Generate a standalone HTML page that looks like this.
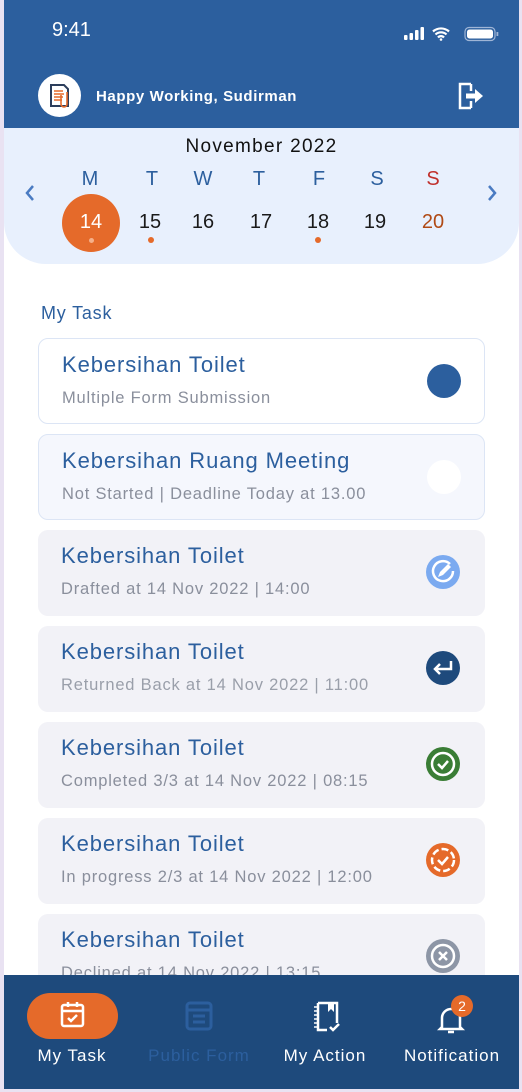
<!DOCTYPE html>
<html><head><meta charset="utf-8"><style>
*{margin:0;padding:0;box-sizing:border-box}
body{width:522px;height:1092px;background:#E9E2F2;font-family:"Liberation Sans",sans-serif;position:relative;overflow:hidden}
.frame{position:absolute;left:4px;top:0;width:515px;height:1089px;background:#fff;overflow:hidden}
.hdr{position:absolute;left:0;top:0;width:515px;height:128px;background:#2C5F9E}
.time{position:absolute;left:48px;top:19px;color:#fff;font-size:20px}
.cal{position:absolute;left:0;top:128px;width:515px;height:136px;background:#E8F0FD;border-radius:0 0 42px 42px}
.abs{position:absolute}
.card{position:absolute;left:34px;width:447px;height:86px;border-radius:10px;background:#F2F2F7}
.card .t{position:absolute;left:23px;top:13px;font-size:22px;color:#2C5F9E;letter-spacing:0.9px}
.card .s{position:absolute;left:23px;top:50px;font-size:16.5px;color:#8A8F9C;letter-spacing:0.8px}
.card svg{position:absolute;left:387px;top:24px}
.nav{position:absolute;left:0;top:975px;width:515px;height:114px;background:#1E4A7C}
.lbl{position:absolute;top:71px;font-size:17px;color:#fff;letter-spacing:1px;text-align:center}
.dn{position:absolute;font-size:20px;color:#2C5F9E;text-align:center;width:30px}
.dd{position:absolute;font-size:20px;color:#1a1a1a;text-align:center;width:40px}
</style></head><body>
<div class="frame">
<div class="hdr">
 <div class="time">9:41</div>
 <svg class="abs" style="left:400px;top:26px" width="100" height="16" viewBox="0 0 100 16">
  <rect x="0" y="9" width="3.5" height="5" rx="1" fill="#fff"/><rect x="5.5" y="7" width="3.5" height="7" rx="1" fill="#fff"/><rect x="11" y="4" width="3.5" height="10" rx="1" fill="#fff"/><rect x="16.5" y="1" width="3.5" height="13" rx="1" fill="#fff"/>
  <path d="M29 5.5a12 12 0 0 1 16 0M31.5 8.5a8 8 0 0 1 11 0M34 11.5a4 4 0 0 1 6 0" stroke="#fff" stroke-width="2.2" fill="none"/><circle cx="37" cy="13.5" r="1.3" fill="#fff"/>
  <rect x="61" y="1.5" width="30" height="13" rx="4" stroke="#9fb5d6" stroke-width="1.2" fill="none"/><rect x="63" y="3.5" width="26" height="9" rx="2.5" fill="#fff"/><rect x="92.5" y="6" width="1.8" height="4" fill="#9fb5d6"/>
 </svg>
 <div class="abs" style="left:34px;top:74px;width:43px;height:43px;border-radius:50%;background:#fff"></div>
 <svg class="abs" style="left:44px;top:82px" width="26" height="28" viewBox="0 0 26 28"><path d="M3 3h13l4 4v17H3z" fill="none" stroke="#2C3E5C" stroke-width="2"/><path d="M6 9h9M6 12h10M6 15h9M6 18h8" stroke="#E56A2A" stroke-width="1.6"/><path d="M19 10v12a3 3 0 0 1-6 0V13" fill="none" stroke="#E56A2A" stroke-width="1.6"/></svg>
 <div class="abs" style="left:92px;top:88px;color:#fff;font-size:15px;font-weight:bold;letter-spacing:0.6px">Happy Working, Sudirman</div>
 <svg class="abs" style="left:452px;top:80px" width="30" height="32" viewBox="0 0 30 32"><path d="M15 4H4v24h11M15 11v-7M15 28v-7" fill="none" stroke="#fff" stroke-width="2.5"/><path d="M10 16h10" stroke="#fff" stroke-width="5"/><path d="M19 9l8 7-8 7z" fill="#fff"/></svg>
</div>
<div class="cal">
 <div class="abs" style="left:0;width:515px;top:8px;text-align:center;font-size:19px;color:#111;letter-spacing:1.3px">November 2022</div>
 <svg class="abs" style="left:20px;top:56px" width="12" height="18"><path d="M9 2L3 9l6 7" stroke="#4A7BC2" stroke-width="2.5" fill="none"/></svg>
 <svg class="abs" style="left:482px;top:56px" width="12" height="18"><path d="M3 2l6 7-6 7" stroke="#4A7BC2" stroke-width="2.5" fill="none"/></svg>
 <div class="dn" style="left:71px;top:40px">M</div>
 <div class="dn" style="left:133px;top:40px">T</div>
 <div class="dn" style="left:184px;top:40px">W</div>
 <div class="dn" style="left:240px;top:40px">T</div>
 <div class="dn" style="left:300px;top:40px">F</div>
 <div class="dn" style="left:358px;top:40px">S</div>
 <div class="dn" style="left:414px;top:40px;color:#C0302C">S</div>
 <div class="abs" style="left:58px;top:66px;width:58px;height:58px;border-radius:50%;background:#E56A2A"></div>
 <div class="dd" style="left:67px;top:83px;color:#fff">14</div>
 <div class="abs" style="left:85px;top:110px;width:5px;height:5px;border-radius:50%;background:#F5B08A"></div>
 <div class="dd" style="left:126px;top:83px">15</div>
 <div class="abs" style="left:144px;top:109px;width:6px;height:6px;border-radius:50%;background:#E56A2A"></div>
 <div class="dd" style="left:179px;top:83px">16</div>
 <div class="dd" style="left:237px;top:83px">17</div>
 <div class="dd" style="left:294px;top:83px">18</div>
 <div class="abs" style="left:311px;top:109px;width:6px;height:6px;border-radius:50%;background:#E56A2A"></div>
 <div class="dd" style="left:351px;top:83px">19</div>
 <div class="dd" style="left:409px;top:83px;color:#B04A15">20</div>
</div>
<div class="abs" style="left:37px;top:303px;font-size:18px;color:#2C5F9E;letter-spacing:0.8px">My Task</div>

<div class="card" style="top:338px;background:#fff;border:1px solid #DCE5F5"><div class="t">Kebersihan Toilet</div><div class="s">Multiple Form Submission</div><svg width="36" height="36"><circle cx="18" cy="18" r="17" fill="#2C5F9E"/></svg></div>
<div class="card" style="top:434px;background:#F5F7FD;border:1px solid #DCE5F5"><div class="t">Kebersihan Ruang Meeting</div><div class="s">Not Started | Deadline Today at 13.00</div><svg width="36" height="36"><circle cx="18" cy="18" r="17" fill="#fff"/></svg></div>
<div class="card" style="top:530px"><div class="t">Kebersihan Toilet</div><div class="s">Drafted at 14 Nov 2022 | 14:00</div><svg width="36" height="36"><circle cx="18" cy="18" r="17" fill="#7BAAF0"/><path d="M25 10A10 10 0 1 0 28 17" stroke="#fff" stroke-width="2.5" fill="none"/><path d="M13 23l2-5 8-8 3 3-8 8z" fill="#fff"/></svg></div>
<div class="card" style="top:626px"><div class="t">Kebersihan Toilet</div><div class="s" style="color:#9A9FAA">Returned Back at 14 Nov 2022 | 11:00</div><svg width="36" height="36"><circle cx="18" cy="18" r="17" fill="#1E4A7C"/><path d="M26 11v8H10M15 14l-5 5 5 5" stroke="#fff" stroke-width="2.5" fill="none"/></svg></div>
<div class="card" style="top:722px"><div class="t">Kebersihan Toilet</div><div class="s">Completed 3/3 at 14 Nov 2022 | 08:15</div><svg width="36" height="36"><circle cx="18" cy="18" r="17" fill="#3A7D35"/><circle cx="18" cy="18" r="11" stroke="#fff" stroke-width="2.5" fill="none"/><path d="M13 18l4 4 6-7" stroke="#fff" stroke-width="2.5" fill="none"/></svg></div>
<div class="card" style="top:818px"><div class="t">Kebersihan Toilet</div><div class="s">In progress 2/3 at 14 Nov 2022 | 12:00</div><svg width="36" height="36"><circle cx="18" cy="18" r="17" fill="#E56A2A"/><circle cx="18" cy="18" r="11" stroke="#fff" stroke-width="2.5" fill="none" stroke-dasharray="7 3"/><path d="M13 18l4 4 6-7" stroke="#fff" stroke-width="2.5" fill="none"/></svg></div>
<div class="card" style="top:914px"><div class="t">Kebersihan Toilet</div><div class="s">Declined at 14 Nov 2022 | 13:15</div><svg width="36" height="36"><circle cx="18" cy="18" r="17" fill="#8D96A6"/><circle cx="18" cy="18" r="11" stroke="#fff" stroke-width="2.5" fill="#8D96A6"/><path d="M14 14l8 8M22 14l-8 8" stroke="#fff" stroke-width="2.5"/></svg></div>

<div class="nav">
 <div class="abs" style="left:23px;top:18px;width:91px;height:46px;border-radius:23px;background:#E56A2A"></div>
 <svg class="abs" style="left:55px;top:25px" width="28" height="30" viewBox="0 0 28 30"><rect x="3" y="5" width="21" height="21" rx="2" stroke="#fff" stroke-width="2.5" fill="none"/><path d="M3 11h21M9 2v5M18 2v5" stroke="#fff" stroke-width="2.5"/><path d="M9 18l3 3 6-6" stroke="#fff" stroke-width="2.5" fill="none"/></svg>
 <svg class="abs" style="left:180px;top:25px" width="30" height="32" viewBox="0 0 30 32"><rect x="3" y="3" width="24" height="26" rx="3" stroke="#2C5F9E" stroke-width="3" fill="none"/><path d="M3 10h24M9 16h12M9 22h12" stroke="#2C5F9E" stroke-width="3"/></svg>
 <svg class="abs" style="left:308px;top:26px" width="30" height="32" viewBox="0 0 30 32"><path d="M6 2h19v20M6 2v27h9" stroke="#fff" stroke-width="2.5" fill="none"/><path d="M2 6h3M2 10h3M2 14h3M2 18h3M2 22h3M2 26h3" stroke="#fff" stroke-width="1.5"/><path d="M16 2v9l3-3 3 3V2" fill="#fff"/><path d="M18 26l3 3 6-6" stroke="#fff" stroke-width="2.5" fill="none"/></svg>
 <svg class="abs" style="left:433px;top:28px" width="30" height="34" viewBox="0 0 30 34"><path d="M5 24V15a9 9 0 0 1 18 0v9l2 2H3z" stroke="#fff" stroke-width="2.5" fill="none"/><path d="M11 29h6" stroke="#fff" stroke-width="2.5"/></svg>
 <div class="abs" style="left:447px;top:20px;width:22px;height:22px;border-radius:50%;background:#E56A2A;color:#fff;font-size:14px;text-align:center;line-height:22px">2</div>
 <div class="lbl" style="left:18px;width:100px">My Task</div>
 <div class="lbl" style="left:140px;width:110px;color:#2C5F9E">Public Form</div>
 <div class="lbl" style="left:266px;width:110px">My Action</div>
 <div class="lbl" style="left:388px;width:120px">Notification</div>
</div>
</div>
</body></html>
